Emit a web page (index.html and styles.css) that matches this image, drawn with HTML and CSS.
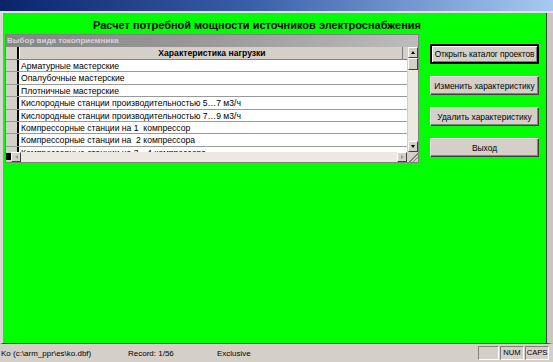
FILE: index.html
```html
<!DOCTYPE html>
<html lang="ru">
<head>
    <meta charset="UTF-8">
    <meta name="viewport" content="width=device-width, initial-scale=1.0">
    <title>Расчет потребной мощности</title>
    <link rel="stylesheet" href="styles.css">
</head>
<body>
    <div class="window">
        <div class="caption"></div>
        <div class="client">
            <div class="form">
                <h1 class="form-title">Расчет потребной мощности источников электроснабжения</h1>
                <div class="form-body">
                    <div class="grid">
                        <div class="grid-caption">Выбор вида токоприемника</div>
                        <div class="grid-main">
                            <div class="grid-table">
                                <div class="grid-head">
                                    <span class="ind"></span>
                                    <span class="cell">Характеристика нагрузки</span>
                                </div>
                                <div class="grid-rows">
                                    <div class="row"><span class="ind"></span><span class="cell">Арматурные мастерские</span></div>
                                    <div class="row"><span class="ind"></span><span class="cell">Опалубочные мастерские</span></div>
                                    <div class="row"><span class="ind"></span><span class="cell">Плотничные мастерские</span></div>
                                    <div class="row"><span class="ind"></span><span class="cell">Кислородные станции производительностью 5…7 м3/ч</span></div>
                                    <div class="row"><span class="ind"></span><span class="cell">Кислородные станции производительностью 7…9 м3/ч</span></div>
                                    <div class="row"><span class="ind"></span><span class="cell">Компрессорные станции на 1&nbsp; компрессор</span></div>
                                    <div class="row"><span class="ind"></span><span class="cell">Компрессорные станции на&nbsp; 2 компрессора</span></div>
                                    <div class="row"><span class="ind"></span><span class="cell">Компрессорные станции на 3…4 компрессора</span></div>
                                </div>
                            </div>
                            <div class="vscroll">
                                <span class="sbtn"><i class="arr-up"></i></span>
                                <span class="thumb"></span>
                                <span class="track"></span>
                                <span class="sbtn"><i class="arr-down"></i></span>
                            </div>
                        </div>
                        <div class="grid-bottom">
                            <span class="rec-mark"></span>
                            <div class="hscroll">
                                <span class="sbtn"><i class="arr-left"></i></span>
                                <span class="track"></span>
                                <span class="sbtn"><i class="arr-right"></i></span>
                            </div>
                            <span class="grip"></span>
                        </div>
                    </div>

                    <div class="buttons">
                        <button class="btn btn-default">Открыть каталог проектов</button>
                        <button class="btn">Изменить характеристику</button>
                        <button class="btn">Удалить характеристику</button>
                        <button class="btn">Выход</button>
                    </div>
                </div>
            </div>
        </div>
        <div class="statusbar">
            <span class="st-file">Ko (c:\arm_ppr\es\ko.dbf)</span>
            <span class="st-rec">Record: 1/56</span>
            <span class="st-mode">Exclusive</span>
            <span class="st-fill"></span>
            <span class="st-panel st-blank"></span>
            <span class="st-panel st-num">NUM</span>
            <span class="st-panel st-caps">CAPS</span>
        </div>
    </div>
</body>
</html>
```

FILE: styles.css
```css
body {
    margin: 0;
    padding: 0;
    font-family: "Liberation Sans", Arial, sans-serif;
    background: #d4d0c8;
    overflow: hidden;
}

.window {
    width: 553px;
    height: 362px;
    display: flex;
    flex-direction: column;
}

.caption {
    height: 11px;
    background: linear-gradient(to right, #0a246a, #3a5ea8 45%, #a6caf0);
    border-bottom: 2px solid #e4e2dc;
}

.client {
    flex: 1;
    display: flex;
    border-left: 3px solid #d8d6d0;
    border-right: 6px solid #c8c6c0;
    border-bottom: 1px solid #404040;
    min-height: 0;
}

.form {
    flex: 1;
    background: #00ff00;
    border-right: 1px solid #404040;
    padding: 6px 0 0 2px;
}

.form-title {
    margin: 0 37px 0 0;
    text-align: center;
    font-size: 11px;
    line-height: 12px;
    font-weight: bold;
    color: #000;
    height: 15px;
}

.form-body {
    display: flex;
    gap: 11px;
    align-items: flex-start;
}

/* таблица */
.grid {
    width: 412px;
    height: 127px;
    border: 1px solid #808080;
    background: #d4d0c8;
    display: flex;
    flex-direction: column;
}

.grid-caption {
    height: 12px;
    background: linear-gradient(to right, #868686, #9a9a9a 50%, #bcbcbc);
    color: #d4d4d4;
    font-size: 8px;
    font-weight: bold;
    line-height: 12px;
    padding-left: 1px;
}

.grid-main {
    display: flex;
    height: 105px;
}

.grid-table {
    flex: 1;
    display: flex;
    flex-direction: column;
    overflow: hidden;
    background: #fff;
}

.grid-head {
    display: flex;
    height: 12px;
    background: #d4d0c8;
    border-bottom: 1px solid #808080;
    flex-shrink: 0;
}

.grid-head .cell {
    font-weight: bold;
    text-align: center;
    border-left: 1px solid #fff;
    border-right: 1px solid #808080;
    margin-right: 4px;
    line-height: 12px;
}

.ind {
    width: 11px;
    flex-shrink: 0;
    background: #d4d0c8;
    border-right: 2px solid #000;
}

.cell {
    flex: 1;
    font-size: 8.6px;
    color: #000;
    white-space: nowrap;
    overflow: hidden;
    padding-left: 2px;
}

.grid-rows {
    flex: 1;
    overflow: hidden;
}

.row {
    display: flex;
    height: 12.4px;
    border-bottom: 1px solid #9a9a9a;
    box-sizing: border-box;
}

.row .cell {
    line-height: 12px;
}

/* полосы прокрутки */
.vscroll {
    width: 10px;
    display: flex;
    flex-direction: column;
    background: #ece9e2;
    border-left: 1px solid #d4d0c8;
}

.hscroll {
    flex: 1;
    display: flex;
    background: #ece9e2;
}

.sbtn {
    width: 10px;
    height: 10px;
    box-sizing: border-box;
    background: #d4d0c8;
    border: 1px solid;
    border-color: #fff #404040 #404040 #fff;
    display: flex;
    align-items: center;
    justify-content: center;
    flex-shrink: 0;
}

.vscroll .sbtn {
    height: 11px;
}

.thumb {
    height: 12px;
    box-sizing: border-box;
    background: #d4d0c8;
    border: 1px solid;
    border-color: #fff #404040 #404040 #fff;
}

.track {
    flex: 1;
}

.arr-up, .arr-down, .arr-left, .arr-right {
    width: 0;
    height: 0;
    border: 2.5px solid transparent;
}

.arr-up { border-bottom: 3px solid #000; border-top: 0; }
.arr-down { border-top: 3px solid #000; border-bottom: 0; }
.arr-left { border-right: 3px solid #9a9a9a; border-left: 0; }
.arr-right { border-left: 3px solid #9a9a9a; border-right: 0; }

.grid-bottom {
    display: flex;
    height: 10px;
}

.rec-mark {
    width: 5px;
    background: #000;
    margin: 1px 0 2px;
}

.grip {
    width: 11px;
    background:
        linear-gradient(135deg, transparent 55%, #808080 55%, #808080 62%, transparent 62%, transparent 72%, #808080 72%, #808080 79%, transparent 79%),
        #d4d0c8;
}

/* кнопки */
.buttons {
    display: flex;
    flex-direction: column;
    gap: 12px;
    margin-top: 10px;
}

.btn {
    width: 109px;
    height: 19px;
    padding: 0;
    background: #d4d0c8;
    border: 1px solid;
    border-color: #fff #404040 #404040 #fff;
    box-shadow: inset -1px -1px 0 #808080;
    font-family: "Liberation Sans", Arial, sans-serif;
    font-size: 8.4px;
    color: #000;
    white-space: nowrap;
    cursor: pointer;
}

.btn-default {
    height: 20px;
    border-width: 2px;
    border-color: #000;
    box-shadow: inset 1px 1px 0 #fff, inset -1px -1px 0 #808080;
    letter-spacing: -0.1px;
}

/* строка состояния */
.statusbar {
    height: 18px;
    display: flex;
    align-items: center;
    font-size: 8px;
    color: #000;
    padding: 0 4px 0 1px;
    box-sizing: border-box;
}

.st-file { width: 127px; }
.st-rec { width: 89px; }
.st-mode { width: 80px; }
.st-fill { flex: 1; }

.st-panel {
    width: 21px;
    height: 14px;
    line-height: 12px;
    box-sizing: border-box;
    border: 1px solid;
    border-color: #808080 #fff #fff #808080;
    text-align: center;
    margin-left: 1px;
    font-size: 7.6px;
    white-space: nowrap;
}

.st-num {
    width: 24px;
}

.st-caps {
    width: 24px;
}
```
